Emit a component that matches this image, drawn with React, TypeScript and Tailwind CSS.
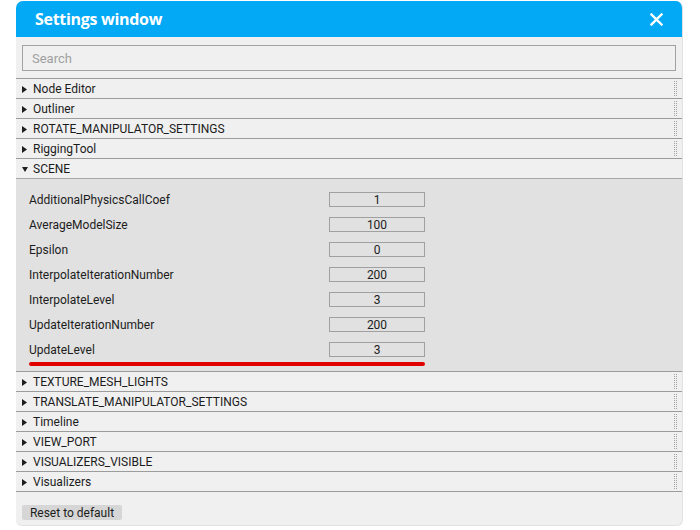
import { useState } from "react";

const SECTIONS_BEFORE = ["Node Editor", "Outliner", "ROTATE_MANIPULATOR_SETTINGS", "RiggingTool"];
const SECTIONS_AFTER = [
  "TEXTURE_MESH_LIGHTS",
  "TRANSLATE_MANIPULATOR_SETTINGS",
  "Timeline",
  "VIEW_PORT",
  "VISUALIZERS_VISIBLE",
  "Visualizers",
];

const SCENE_PROPS: { name: string; value: string }[] = [
  { name: "AdditionalPhysicsCallCoef", value: "1" },
  { name: "AverageModelSize", value: "100" },
  { name: "Epsilon", value: "0" },
  { name: "InterpolateIterationNumber", value: "200" },
  { name: "InterpolateLevel", value: "3" },
  { name: "UpdateIterationNumber", value: "200" },
  { name: "UpdateLevel", value: "3" },
];

function Grip() {
  return (
    <svg width="3" height="15" viewBox="0 0 3 15" className="shrink-0">
      {[0, 2, 4, 6, 8, 10, 12, 14].map((y) => (
        <g key={y} fill="#a3a3a3">
          <rect x="0" y={y} width="1" height="1" />
          <rect x="2" y={y} width="1" height="1" />
        </g>
      ))}
    </svg>
  );
}

function Arrow({ open }: { open: boolean }) {
  return open ? (
    <svg width="6" height="5" viewBox="0 0 6 5" className="shrink-0">
      <polygon points="0,0 6,0 3,5" fill="#1e1e1e" />
    </svg>
  ) : (
    <svg width="5" height="7" viewBox="0 0 5 7" className="shrink-0">
      <polygon points="0,0 5,3.5 0,7" fill="#1e1e1e" />
    </svg>
  );
}

function SectionRow({ title, open = false }: { title: string; open?: boolean }) {
  return (
    <div className="h-[20px] shrink-0 border-t border-[#9c9c9c] flex items-center justify-between pl-[6px] pr-[5px] bg-[#f0f0f0]">
      <div className="flex items-center gap-[6px] pt-[1px]">
        <div className="w-[5px] flex justify-center">
          <Arrow open={open} />
        </div>
        <span className="text-[12px] text-[#1c1c1c] leading-[14px]">{title}</span>
      </div>
      {!open && <Grip />}
    </div>
  );
}

export default function App() {
  const [query, setQuery] = useState("");

  return (
    <div className="w-[700px] h-[530px] bg-white pt-[1px] pl-[16px] font-['Roboto',sans-serif]">
      <div className="w-[667px] h-[525px] flex flex-col bg-[#f0f0f0] rounded-t-[7px] rounded-b-[6px] overflow-hidden border-r border-b border-[#e2e2e2]">
        <div className="h-[36px] shrink-0 bg-[#03a9f4] flex items-center justify-between pl-[19px] pr-[19px]">
          <span className="font-['Open_Sans',sans-serif] font-bold text-[16px] tracking-[-0.3px] text-white leading-none">
            Settings window
          </span>
          <svg width="13" height="13" viewBox="0 0 13 13">
            <path d="M1.5 1.5 L11.5 11.5 M11.5 1.5 L1.5 11.5" stroke="#fff" strokeWidth="2.4" strokeLinecap="square" />
          </svg>
        </div>

        <div className="shrink-0 pt-[8px] pb-[7px] pl-[6px] pr-[6px]">
          <input
            value={query}
            onChange={(e) => setQuery(e.target.value)}
            placeholder="Search"
            className="block w-full h-[26px] border border-[#a2a2a2] bg-[#f0f0f0] px-[9px] text-[13px] text-[#333] placeholder:text-[#a0a0a0] outline-none font-['Roboto',sans-serif]"
          />
        </div>

        {SECTIONS_BEFORE.map((s) => (
          <SectionRow key={s} title={s} />
        ))}
        <SectionRow title="SCENE" open />

        <div className="shrink-0 border-t border-[#a8a8a8] bg-[#e1e1e1] pt-[8px] pb-[5px] pl-[13px]">
          {SCENE_PROPS.map((p) => (
            <div key={p.name} className="h-[25px] flex items-center">
              <span className="w-[300px] text-[12px] text-[#1c1c1c] leading-[14px]">{p.name}</span>
              <div className="w-[96px] h-[15px] border border-[#a0a0a0] flex items-center justify-center text-[12px] text-[#1c1c1c] leading-none">
                {p.value}
              </div>
            </div>
          ))}
          <div className="w-[396px] h-[4px] rounded-full bg-[#e00000]" />
        </div>

        {SECTIONS_AFTER.map((s) => (
          <SectionRow key={s} title={s} />
        ))}

        <div className="flex-1 border-t border-[#9c9c9c] pt-[13px] pl-[6px]">
          <button className="block h-[15px] w-[100px] bg-[#d6d6d6] text-[12px] text-[#1c1c1c] leading-none font-['Roboto',sans-serif] rounded-[2px]">
            Reset to default
          </button>
        </div>
      </div>
    </div>
  );
}
